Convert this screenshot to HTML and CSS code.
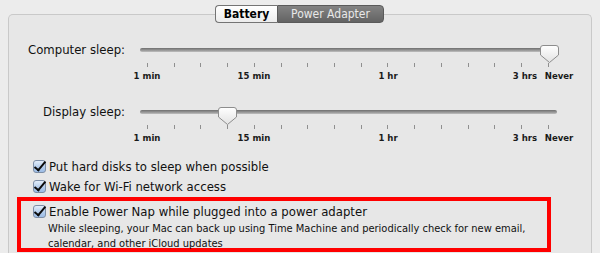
FILE: index.html
```html
<!DOCTYPE html>
<html>

<head>
    <title>Energy Saver - Power Adapter</title>
    <link rel="stylesheet" href="styles.css">
</head>

<body>
    <div class="tabs">
        <div class="tab tab-active">Battery</div>
        <div class="tab tab-selected">Power Adapter</div>
    </div>
    <div class="panel">
        <div class="slider-row slider-row-first">
            <div class="slider-label">Computer sleep:</div>
            <div class="slider">
                <div class="track"></div>
                <div class="ticks">
                    <span></span><span></span><span></span><span></span><span></span><span></span><span></span><span></span>
                    <span></span><span></span><span></span><span></span><span></span><span></span><span></span><span></span>
                </div>
                <div class="tick-label" style="left: 7px">1 min</div>
                <div class="tick-label" style="left: 114px">15 min</div>
                <div class="tick-label" style="left: 248px">1 hr</div>
                <div class="tick-label" style="left: 385px">3 hrs</div>
                <div class="tick-label" style="left: 419px">Never</div>
                <svg class="thumb" style="left: 400px" width="19" height="19" viewBox="0 0 19 19">
                    <defs>
                        <linearGradient id="tg1" x1="0" y1="0" x2="0" y2="1">
                            <stop offset="0" stop-color="#ffffff"/>
                            <stop offset="1" stop-color="#e2e2e2"/>
                        </linearGradient>
                    </defs>
                    <path d="M3 0.5 H16 Q18.5 0.5 18.5 3 V10 L9.5 17.5 L0.5 10 V3 Q0.5 0.5 3 0.5 Z" fill="url(#tg1)" stroke="#8d8d8d"/>
                </svg>
            </div>
        </div>
        <div class="slider-row">
            <div class="slider-label">Display sleep:</div>
            <div class="slider">
                <div class="track"></div>
                <div class="ticks">
                    <span></span><span></span><span></span><span></span><span></span><span></span><span></span><span></span>
                    <span></span><span></span><span></span><span></span><span></span><span></span><span></span><span></span>
                </div>
                <div class="tick-label" style="left: 7px">1 min</div>
                <div class="tick-label" style="left: 114px">15 min</div>
                <div class="tick-label" style="left: 248px">1 hr</div>
                <div class="tick-label" style="left: 385px">3 hrs</div>
                <div class="tick-label" style="left: 419px">Never</div>
                <svg class="thumb" style="left: 78px" width="19" height="19" viewBox="0 0 19 19">
                    <defs>
                        <linearGradient id="tg2" x1="0" y1="0" x2="0" y2="1">
                            <stop offset="0" stop-color="#ffffff"/>
                            <stop offset="1" stop-color="#e2e2e2"/>
                        </linearGradient>
                    </defs>
                    <path d="M3 0.5 H16 Q18.5 0.5 18.5 3 V10 L9.5 17.5 L0.5 10 V3 Q0.5 0.5 3 0.5 Z" fill="url(#tg2)" stroke="#8d8d8d"/>
                </svg>
            </div>
        </div>

        <div class="check-row">
            <span class="checkbox"></span>
            <span>Put hard disks to sleep when possible</span>
        </div>
        <div class="check-row">
            <span class="checkbox"></span>
            <span>Wake for Wi-Fi network access</span>
        </div>
        <div class="highlight">
            <div class="check-row">
                <span class="checkbox"></span>
                <span>Enable Power Nap while plugged into a power adapter</span>
            </div>
            <div class="description">
                While sleeping, your Mac can back up using Time Machine and periodically check for new email,<br>
                calendar, and other iCloud updates
            </div>
        </div>
    </div>
</body>

</html>
```

FILE: styles.css
```css
body {
    margin: 0;
    width: 600px;
    height: 253px;
    overflow: hidden;
    background: #ececec;
    font-family: "DejaVu Sans Condensed", "DejaVu Sans", sans-serif;
    font-size: 13px;
    color: #111;
}

.tabs {
    display: flex;
    justify-content: center;
    padding-top: 5px;
    padding-right: 1px;
    position: relative;
    z-index: 1;
}

.tab {
    height: 16px;
    line-height: 16px;
    border: 1px solid #747474;
    text-align: center;
    font-size: 12px;
}

.tab-active {
    width: 61px;
    border-radius: 4px 0 0 4px;
    border-right: none;
    background: linear-gradient(#ffffff, #ececec);
    font-weight: bold;
    color: #000;
}

.tab-selected {
    width: 105px;
    border-radius: 0 4px 4px 0;
    background: linear-gradient(#838383, #636363);
    border-color: #5a5a5a;
    color: #e8e8e8;
}

.panel {
    margin: -9px 8px 0;
    height: 239px;
    border: 1px solid #c9c9c9;
    border-bottom: none;
    border-radius: 5px 5px 0 0;
    background: #e7e7e7;
    padding-top: 27px;
    box-sizing: border-box;
}

.slider-row {
    display: grid;
    grid-template-columns: 116px 418px;
    column-gap: 15px;
    height: 52px;
}

.slider-row-first {
    height: 62px;
}

.slider-label {
    text-align: right;
    line-height: 16px;
}

.slider {
    position: relative;
    height: 40px;
}

.track {
    margin: 6px 1px 0 0;
    height: 4px;
    border-radius: 2px;
    background: linear-gradient(#6f6f6f, #9a9a9a 60%, #c0c0c0);
}

.ticks {
    display: flex;
    justify-content: space-between;
    margin: 11px 9px 0 7px;
    height: 4px;
}

.ticks span {
    width: 1px;
    background: #8f8f8f;
}

.tick-label {
    position: absolute;
    top: 28px;
    font-size: 9.5px;
    font-weight: bold;
    line-height: 12px;
    white-space: nowrap;
    color: #1a1a1a;
    transform: translateX(-50%);
}

.thumb {
    position: absolute;
    top: 3px;
}

.check-row {
    display: flex;
    align-items: center;
    height: 20px;
    padding-left: 24px;
    gap: 3px;
    white-space: nowrap;
}

.checkbox {
    position: relative;
    width: 11px;
    height: 11px;
    border: 1px solid #7d8ea6;
    border-radius: 3px;
    background: linear-gradient(#e3edf9, #b4cdec 55%, #9dbde6);
    flex: none;
}

.checkbox::after {
    content: "";
    position: absolute;
    left: 3px;
    top: -2px;
    width: 4px;
    height: 10px;
    border: solid #0b0b0b;
    border-width: 0 2.5px 2.5px 0;
    transform: rotate(40deg);
}

.highlight {
    margin: 1px 0 0 8px;
    width: 526px;
    height: 47px;
    border: 4px solid #ff0000;
}

.highlight .check-row {
    padding-left: 12px;
}

.description {
    padding-left: 27px;
    font-size: 11px;
    line-height: 15px;
    white-space: nowrap;
}
```
